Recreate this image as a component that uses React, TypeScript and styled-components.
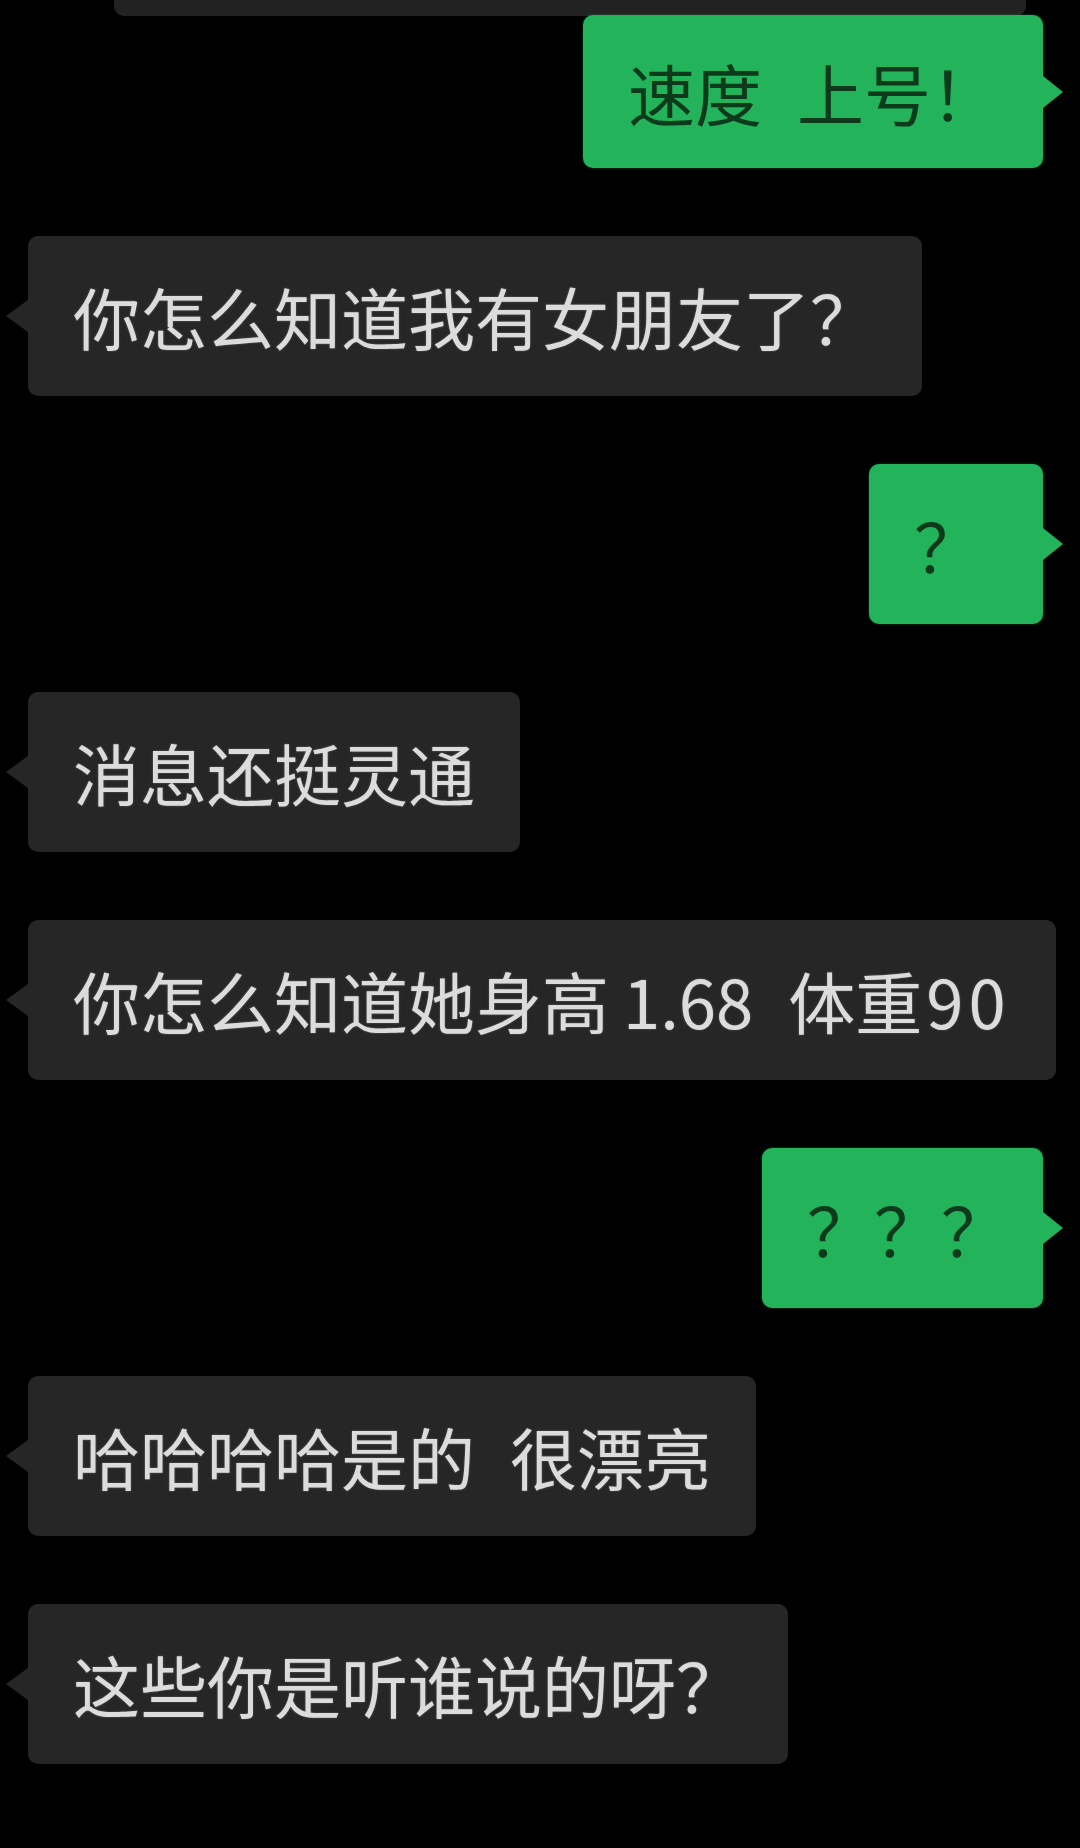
import React from "react";
import styled, { createGlobalStyle, css } from "styled-components";

const GlobalStyle = createGlobalStyle`
  html, body {
    margin: 0;
    padding: 0;
    background: #000;
  }
  body {
    font-family: "Noto Sans CJK SC", "Noto Sans", sans-serif;
  }
`;

const Page = styled.div`
  width: 1080px;
  height: 1848px;
  background: #000;
  overflow: hidden;
  display: flex;
  flex-direction: column;
`;

const CutBubble = styled.div`
  height: 16px;
  margin-left: 114px;
  width: 912px;
  background: #222222;
  border-radius: 0 0 10px 10px;
`;

const List = styled.div`
  display: flex;
  flex-direction: column;
  gap: 68px;
  margin-top: -1px;
`;

const Row = styled.div<{ $mine?: boolean }>`
  display: flex;
  justify-content: ${(p) => (p.$mine ? "flex-end" : "flex-start")};
  padding: 0 37px 0 28px;
`;

const Bubble = styled.div<{
  $mine?: boolean;
  $short?: boolean;
  $minWidth?: number;
  $padRight?: number;
}>`
  position: relative;
  box-sizing: border-box;
  padding: ${(p) => (p.$short ? "30px 45px 29px 45px" : "33px 45px 33px 45px")};
  ${(p) => p.$padRight !== undefined && css`padding-right: ${p.$padRight}px;`}
  border-radius: 10px;
  font-family: "Noto Sans CJK SC", "Noto Sans", sans-serif;
  font-size: 67px;
  line-height: 94px;
  word-spacing: 20px;
  white-space: pre;
  ${(p) => p.$minWidth && css`min-width: ${p.$minWidth}px;`}
  ${(p) =>
    p.$mine
      ? css`
          background: #22b35b;
          color: #0c3a1b;
          box-shadow: 0 0 3px rgba(40, 200, 100, 0.35);
        `
      : css`
          background: #262626;
          color: #dcdcdc;
          text-shadow: 0 0 2px rgba(255, 255, 255, 0.35);
        `}

  &::before {
    content: "";
    position: absolute;
    top: 50%;
    margin-top: -16px;
    border-top: 16px solid transparent;
    border-bottom: 16px solid transparent;
    ${(p) =>
      p.$mine
        ? css`
            right: -20px;
            border-left: 20px solid #22b35b;
          `
        : css`
            left: -22px;
            border-right: 22px solid #262626;
          `}
  }
`;

const Num = styled.span<{ $lead?: number; $track?: number }>`
  margin-left: ${(p) => p.$lead ?? 0}px;
  letter-spacing: ${(p) => p.$track ?? 0}px;
`;

type Msg = {
  text: React.ReactNode;
  mine?: boolean;
  short?: boolean;
  minWidth?: number;
  padRight?: number;
};

const messages: Msg[] = [
  { text: "速度 上号！", mine: true, short: true },
  { text: "你怎么知道我有女朋友了？" },
  { text: "？", mine: true, minWidth: 174 },
  { text: "消息还挺灵通" },
  {
    text: (
      <>
        你怎么知道她身高<Num $lead={14}>1.68</Num> 体重<Num $lead={4} $track={5}>90</Num>
      </>
    ),
  },
  { text: "？？？", mine: true, padRight: 35 },
  { text: "哈哈哈哈是的 很漂亮" },
  { text: "这些你是听谁说的呀？" },
];

export default function App() {
  return (
    <Page>
      <GlobalStyle />
      <CutBubble />
      <List>
        {messages.map((m, i) => (
          <Row key={i} $mine={m.mine}>
            <Bubble
              $mine={m.mine}
              $short={m.short}
              $minWidth={m.minWidth}
              $padRight={m.padRight}
            >
              {m.text}
            </Bubble>
          </Row>
        ))}
      </List>
    </Page>
  );
}
